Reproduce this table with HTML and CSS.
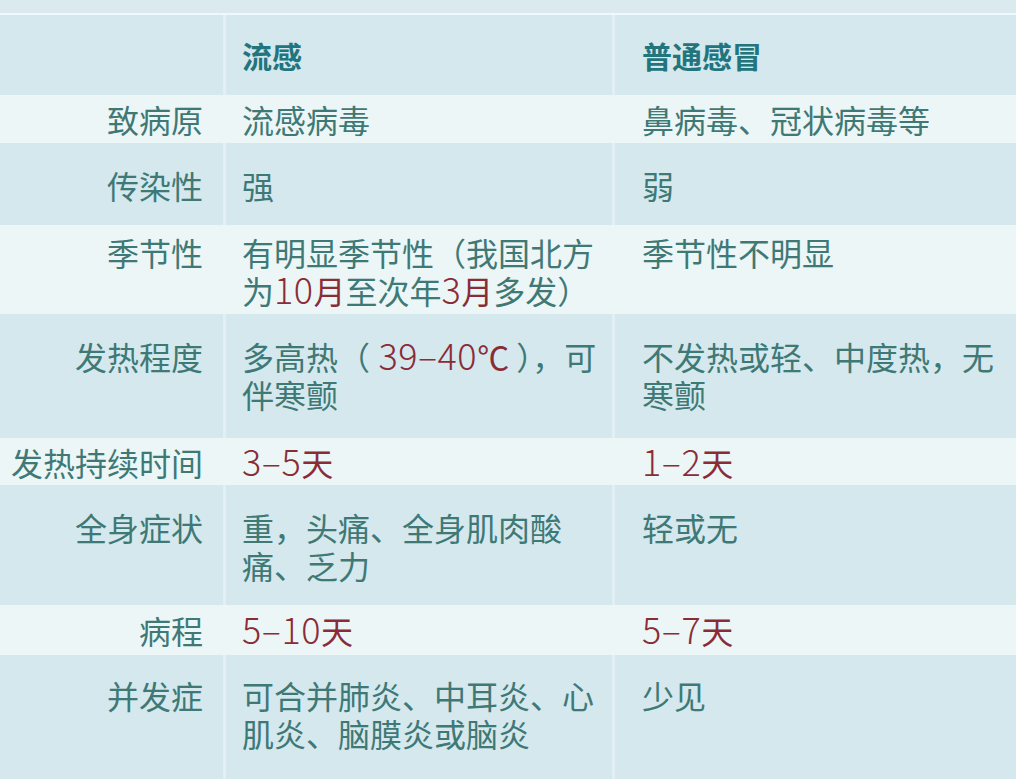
FILE: index.html
```html
<!DOCTYPE html>
<html lang="zh-CN">
<head>
<meta charset="utf-8">
<title>流感与普通感冒</title>
<link rel="stylesheet" href="styles.css">
</head>
<body>
<div class="page">
  <div class="topstrip"></div>
  <div class="table">
    <div class="row head">
      <div class="cell label"></div>
      <div class="cell c2">流感</div>
      <div class="cell c3">普通感冒</div>
    </div>
    <div class="row light r-48">
      <div class="cell label">致病原</div>
      <div class="cell c2">流感病毒</div>
      <div class="cell c3">鼻病毒、冠状病毒等</div>
    </div>
    <div class="row blue r-82">
      <div class="cell label">传染性</div>
      <div class="cell c2">强</div>
      <div class="cell c3">弱</div>
    </div>
    <div class="row light r-89">
      <div class="cell label">季节性</div>
      <div class="cell c2">有明显季节性（我国北方<br>为<span class="red num">10</span><span class="red">月</span>至次年<span class="red num">3</span><span class="red">月</span>多发）</div>
      <div class="cell c3">季节性不明显</div>
    </div>
    <div class="row blue r-124">
      <div class="cell label">发热程度</div>
      <div class="cell c2">多高热（<span class="red num"> 39–40</span><span class="red">℃</span> ），可<br>伴寒颤</div>
      <div class="cell c3">不发热或轻、中度热，无<br>寒颤</div>
    </div>
    <div class="row light r-47">
      <div class="cell label">发热持续时间</div>
      <div class="cell c2"><span class="red num">3–5</span><span class="red">天</span></div>
      <div class="cell c3"><span class="red num">1–2</span><span class="red">天</span></div>
    </div>
    <div class="row blue r-120">
      <div class="cell label">全身症状</div>
      <div class="cell c2">重，头痛、全身肌肉酸<br>痛、乏力</div>
      <div class="cell c3">轻或无</div>
    </div>
    <div class="row light r-50">
      <div class="cell label">病程</div>
      <div class="cell c2"><span class="red num">5–10</span><span class="red">天</span></div>
      <div class="cell c3"><span class="red num">5–7</span><span class="red">天</span></div>
    </div>
    <div class="row blue r-last">
      <div class="cell label">并发症</div>
      <div class="cell c2">可合并肺炎、中耳炎、心<br>肌炎、脑膜炎或脑炎</div>
      <div class="cell c3">少见</div>
    </div>
  </div>
</div>
</body>
</html>
```

FILE: styles.css
```css
html, body {
  margin: 0;
  padding: 0;
}
body {
  background: #d4e8ee;
  font-family: "Noto Sans CJK SC", "Noto Sans", sans-serif;
  color: #3f7976;
}
.page {
  width: 1016px;
  height: 779px;
  overflow: hidden;
  display: flex;
  flex-direction: column;
}
.topstrip {
  height: 13px;
  background: #dbeaee;
  border-bottom: 2px solid #eff8fa;
}
.table {
  flex: 1;
  display: flex;
  flex-direction: column;
}
.row {
  display: grid;
  grid-template-columns: 223px 389px 1fr;
  font-size: 32px;
  line-height: 38px;
  --pt: 5px;
  --pb: 5px;
}
.cell {
  padding-top: var(--pt);
  padding-bottom: var(--pb);
  white-space: nowrap;
}
.cell.label {
  text-align: right;
  padding-right: 20px;
}
.cell.c2 {
  padding-left: 16px;
  border-left: 3px solid transparent;
}
.cell.c3 {
  padding-left: 27px;
  border-left: 3px solid transparent;
}
.row.head,
.row.blue {
  background: #d4e8ee;
}
.row.head .cell.c2,
.row.head .cell.c3,
.row.blue .cell.c2,
.row.blue .cell.c3 {
  border-left-color: #e3f0f3;
}
.row.light {
  background: #ecf6f7;
}
.row.head {
  height: 80px;
  font-size: 30px;
  font-weight: 700;
  color: #23757d;
  --pt: 0px;
  --pb: 0px;
}
.row.head .cell {
  display: flex;
  align-items: center;
}
.r-48 { --pt: 5px; --pb: 5px; }
.r-47 { --pt: 5px; --pb: 4px; }
.r-50 { --pt: 6px; --pb: 6px; }
.r-82 { --pt: 23px; --pb: 21px; }
.r-89 { --pt: 8px; --pb: 5px; }
.r-124 { --pt: 23px; --pb: 25px; }
.r-120 { --pt: 23px; --pb: 21px; }
.r-last { --pt: 21px; --pb: 0px; flex: 1; }
.red {
  color: #8a2c35;
}
.num {
  font-size: 36px;
  font-weight: 300;
  line-height: 0;
  letter-spacing: 0.5px;
}
```
